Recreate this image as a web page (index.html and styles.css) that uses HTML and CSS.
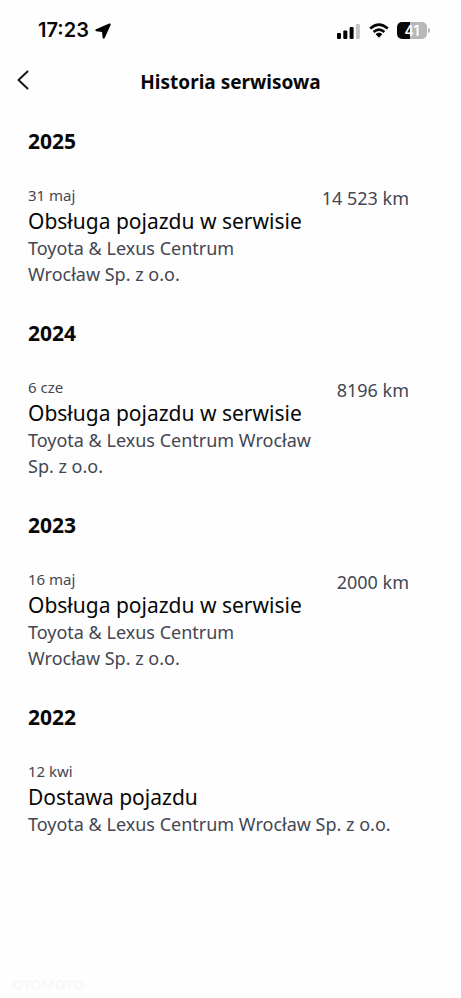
FILE: index.html
```html
<!DOCTYPE html>
<html lang="pl">
<head>
<meta charset="utf-8">
<meta name="viewport" content="width=device-width, initial-scale=1">
<title>Historia serwisowa</title>
<link rel="stylesheet" href="styles.css">
</head>
<body>
<div class="screen">
  <div class="status">
    <div class="status-side">
      <span class="clock">17:23</span>
      <svg class="location" width="16" height="16" viewBox="0 0 16 16" aria-hidden="true"><path d="M14.200.5 1 6.200C-.1 6.800.1 8 1.300 8.200L7 8.900 7.600 14.600C7.800 15.900 9.200 16 9.700 14.900L15.600 1.900C15.900.9 15.200.1 14.200.5Z"/></svg>
    </div>
    <div class="status-side">
      <svg width="24" height="16" viewBox="0 0 24 16" aria-hidden="true"><rect x="0" y="10" width="4" height="6" rx="1"/><rect x="6.300" y="7.500" width="4" height="8.500" rx="1"/><rect x="12.600" y="4" width="4" height="12" rx="1"/><rect class="dim" x="18.900" y="1" width="4" height="15" rx="1"/></svg>
      <svg class="wifi" width="20" height="16" viewBox="0 0 20 16" aria-hidden="true"><path class="arc" d="M1.200 5.500Q10-2.300 18.800 5.500M4.600 9Q10 4.400 15.400 9"/><path d="M10 9.800C8.600 9.800 7.500 10.400 6.700 11.200L10 14.700 13.300 11.200C12.500 10.400 11.400 9.800 10 9.800Z"/></svg>
      <div class="battery"><span class="level">41</span><span class="tip"></span></div>
    </div>
  </div>
  <header class="bar">
    <button class="back" type="button" aria-label="Wstecz"><svg width="14" height="20" viewBox="0 0 14 20" aria-hidden="true"><path d="M11.500 1.500 2.500 10 11.500 18.500"/></svg></button>
    <h1>Historia serwisowa</h1>
  </header>
  <main>
    <section>
      <h2>2025</h2>
      <article>
        <div class="details">
          <p class="date">31 maj</p>
          <h3>Obsługa pojazdu w serwisie</h3>
          <p class="dealer">Toyota &amp; Lexus Centrum<br>Wrocław Sp. z o.o.</p>
        </div>
        <p class="mileage">14 523 km</p>
      </article>
    </section>
    <section>
      <h2>2024</h2>
      <article>
        <div class="details">
          <p class="date">6 cze</p>
          <h3>Obsługa pojazdu w serwisie</h3>
          <p class="dealer">Toyota &amp; Lexus Centrum Wrocław<br>Sp. z o.o.</p>
        </div>
        <p class="mileage">8196 km</p>
      </article>
    </section>
    <section>
      <h2>2023</h2>
      <article>
        <div class="details">
          <p class="date">16 maj</p>
          <h3>Obsługa pojazdu w serwisie</h3>
          <p class="dealer">Toyota &amp; Lexus Centrum<br>Wrocław Sp. z o.o.</p>
        </div>
        <p class="mileage">2000 km</p>
      </article>
    </section>
    <section>
      <h2>2022</h2>
      <article>
        <div class="details">
          <p class="date">12 kwi</p>
          <h3>Dostawa pojazdu</h3>
          <p class="dealer">Toyota &amp; Lexus Centrum Wrocław Sp. z o.o.</p>
        </div>
      </article>
    </section>
  </main>
  <footer>OTOMOTO</footer>
</div>
</body>
</html>
```
FILE: styles.css
```css
* { box-sizing: border-box; }
body {
  margin: 0;
  background: #fefefe;
  color: #080808;
  font-family: "Noto Sans", sans-serif;
}
h1, h2, h3, p { margin: 0; }
.screen {
  display: flex;
  flex-direction: column;
  min-height: 100vh;
}
.status {
  display: flex;
  justify-content: space-between;
  align-items: center;
  height: 61px;
  padding: 0 34px 0 38px;
}
.status-side {
  display: flex;
  align-items: center;
  gap: 8px;
}
.clock {
  font: 600 20px/25px Inter, sans-serif;
}
.location { margin-left: -2px; }
.dim { fill: #c4c4c4; }
.arc {
  fill: none;
  stroke: #080808;
  stroke-width: 2.6;
}
.battery {
  position: relative;
  width: 30px;
  height: 17px;
  border-radius: 5px;
  background: linear-gradient(to right, #080808 42%, #b8b8b8 42%);
  color: #fefefe;
  font: 600 14px/17px Inter, sans-serif;
  text-align: center;
}
.tip {
  position: absolute;
  left: 31px;
  top: 6px;
  width: 2px;
  height: 5px;
  border-radius: 0 2px 2px 0;
  background: #b8b8b8;
}
.bar {
  display: grid;
  grid-template-columns: 48px 1fr 48px;
  align-items: center;
  height: 42px;
}
.back {
  display: flex;
  align-items: center;
  height: 42px;
  padding: 0 0 4px 16px;
  border: 0;
  background: none;
}
.back path {
  fill: none;
  stroke: #181818;
  stroke-width: 2;
  stroke-linecap: round;
  stroke-linejoin: round;
}
h1 {
  font-size: 19px;
  line-height: 28px;
  text-align: center;
}
main {
  display: flex;
  flex-direction: column;
  gap: 32px;
  padding: 24px 52px 0 28px;
}
h2 {
  margin-bottom: 30px;
  font-size: 21px;
  line-height: 28px;
}
article {
  display: flex;
  justify-content: space-between;
}
.details, .mileage { white-space: nowrap; }
.date {
  margin-bottom: 2px;
  color: #434752;
  font-size: 15px;
  line-height: 20px;
}
h3 {
  font-size: 21px;
  font-weight: 400;
  line-height: 28px;
}
.dealer, .mileage {
  color: #434752;
  font-size: 18px;
  line-height: 26px;
}
footer {
  margin-top: auto;
  padding: 0 12px 4px;
  color: #f8f8f8;
  font: 700 14px/18px "Noto Sans", sans-serif;
}
```
